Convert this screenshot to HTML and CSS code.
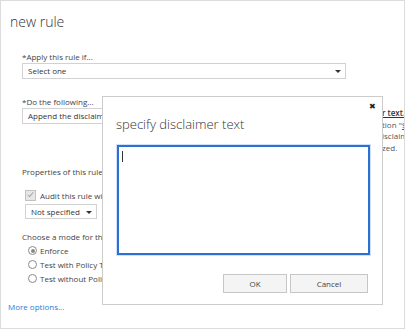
FILE: index.html
```html
<!DOCTYPE html>
<html lang="en">
<head>
    <meta charset="UTF-8">
    <title>new rule</title>
    <link rel="stylesheet" href="styles.css">
</head>
<body>
    <div class="window">
        <h1 class="title">new rule</h1>
        <div class="form">
            <div class="label">*Apply this rule if...</div>
            <div class="select wide">Select one <span class="caret"></span></div>

            <div class="label second">*Do the following...</div>
            <div class="action-row">
                <div class="select action">Append the disclaimer</div>
                <div class="side-note">
                    <a href="#" class="side-link">r text.</a>
                    <div>tion "<span class="side-var">$</span></div>
                    <div>isclaim</div>
                    <div>zed.</div>
                </div>
            </div>

            <div class="label section">Properties of this rule</div>
            <label class="check-row">
                <span class="checkbox"></span>
                Audit this rule with severity level:
            </label>
            <div class="select small">Not specified <span class="caret"></span></div>

            <div class="label section mode">Choose a mode for this rule:</div>
            <div class="radio-row"><span class="radio on"></span>Enforce</div>
            <div class="radio-row"><span class="radio"></span>Test with Policy Tips</div>
            <div class="radio-row"><span class="radio"></span>Test without Policy Tips</div>
        </div>
        <a href="#" class="more">More options...</a>

        <div class="dialog">
            <span class="close">&#x2716;</span>
            <h2 class="dialog-title">specify disclaimer text</h2>
            <div class="textbox"><span class="cursor"></span></div>
            <div class="buttons">
                <button class="btn ok">OK</button>
                <button class="btn cancel">Cancel</button>
            </div>
        </div>
    </div>
</body>
</html>
```

FILE: styles.css
```css
body {
    margin: 0;
    font-family: 'Open Sans', sans-serif;
    color: #444;
    background: #fff;
}
.window {
    position: relative;
    width: 405px;
    height: 329px;
    box-sizing: border-box;
    border: 1px solid #dcdcdc;
    overflow: hidden;
}
.title {
    margin: 12px 0 0 9px;
    font-size: 14px;
    line-height: 18px;
    font-weight: 300;
    color: #333;
}
.form {
    padding-left: 21px;
    font-size: 8px;
}
.label {
    margin-top: 20px;
    line-height: 11px;
    color: #444;
}
.label.second {
    margin-top: 17px;
}
.label.section {
    margin-top: 12px;
}
.label.mode {
    margin-top: 12px;
}
.select {
    position: relative;
    box-sizing: border-box;
    height: 16px;
    margin-top: 1px;
    padding-left: 5px;
    line-height: 14px;
    border: 1px solid #d2d2d2;
    background: #fff;
    color: #333;
}
.select.wide {
    width: 324px;
}
.caret {
    position: absolute;
    right: 4px;
    top: 6px;
    width: 0;
    height: 0;
    border-left: 3px solid transparent;
    border-right: 3px solid transparent;
    border-top: 3px solid #333;
}
.action-row {
    display: flex;
    align-items: flex-start;
}
.select.action {
    width: 320px;
    flex-shrink: 0;
}
.side-note {
    margin-left: 40px;
    line-height: 11.7px;
    white-space: nowrap;
    color: #555;
}
.side-link {
    display: block;
    color: #333;
    font-weight: 600;
}
.side-var {
    color: #0072c6;
    text-decoration: underline;
}
.check-row {
    display: flex;
    align-items: center;
    margin-top: 13px;
    line-height: 11px;
}
.checkbox {
    position: relative;
    width: 9px;
    height: 9px;
    margin: 0 4px 0 3px;
    border: 1px solid #c2c2c2;
    background: #e6e6e6;
}
.checkbox::after {
    content: "";
    position: absolute;
    left: 3px;
    top: 0;
    width: 2px;
    height: 5px;
    border: solid #a8a8a8;
    border-width: 0 1.5px 1.5px 0;
    transform: rotate(40deg);
}
.select.small {
    width: 72px;
    height: 15px;
    margin: 3px 0 0 3px;
}
.radio-row {
    display: flex;
    align-items: center;
    line-height: 14px;
}
.label.mode + .radio-row {
    margin-top: 2px;
}
.radio {
    position: relative;
    box-sizing: border-box;
    width: 9px;
    height: 9px;
    margin: 0 3px 0 6px;
    border: 1px solid #8a8a8a;
    border-radius: 50%;
}
.radio.on::after {
    content: "";
    position: absolute;
    left: 1.5px;
    top: 1.5px;
    width: 4px;
    height: 4px;
    border-radius: 50%;
    background: #888;
}
.more {
    display: block;
    margin: 15px 0 0 7px;
    font-size: 8px;
    line-height: 12px;
    color: #2a7ad3;
    text-decoration: none;
}
.dialog {
    position: absolute;
    left: 101px;
    top: 95px;
    width: 281px;
    height: 209px;
    box-sizing: border-box;
    border: 1px solid #cccccc;
    background: #fff;
}
.close {
    position: absolute;
    right: 6px;
    top: 3px;
    font-size: 8px;
    color: #222;
}
.dialog-title {
    margin: 19px 0 0 13px;
    font-size: 13px;
    line-height: 16px;
    font-weight: 300;
    color: #333;
}
.textbox {
    box-sizing: border-box;
    width: 253px;
    height: 110px;
    margin: 13px 0 0 14px;
    padding: 4px 3px;
    border: 2px solid #2c70d6;
    box-shadow: 0 0 0 1px #cfe0f7;
}
.cursor {
    display: block;
    width: 1px;
    height: 11px;
    background: #333;
}
.buttons {
    display: flex;
    justify-content: flex-end;
    gap: 3px;
    margin: 19px 14px 0 0;
}
.btn {
    height: 19px;
    padding: 0;
    font-family: 'Open Sans', sans-serif;
    font-size: 8px;
    color: #444;
    background: #f4f4f4;
    border: 1px solid #c6c6c6;
}
.btn.ok {
    width: 64px;
}
.btn.cancel {
    width: 78px;
}
```
